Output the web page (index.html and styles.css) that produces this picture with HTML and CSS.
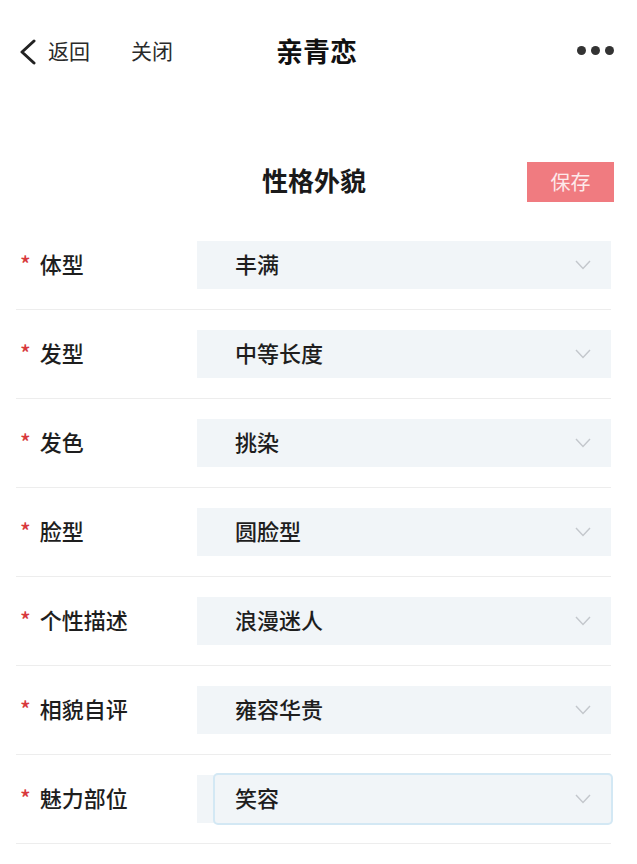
FILE: index.html
```html
<!DOCTYPE html>
<html lang="zh-CN">
<head>
    <meta charset="UTF-8">
    <meta name="viewport" content="width=device-width, initial-scale=1.0">
    <title>亲青恋</title>
    <link rel="stylesheet" href="styles.css">
</head>
<body>
    <!-- 顶部导航 -->
    <div class="nav">
        <div class="nav-left">
            <svg class="back-icon" width="18" height="26" viewBox="0 0 18 26">
                <path d="M15 2 L3 13 L15 24" fill="none" stroke="#222" stroke-width="3" stroke-linecap="round" stroke-linejoin="round"/>
            </svg>
            <span class="nav-link">返回</span>
            <span class="nav-link close">关闭</span>
        </div>
        <div class="nav-title">亲青恋</div>
        <div class="nav-right">
            <span class="dot"></span><span class="dot"></span><span class="dot"></span>
        </div>
    </div>

    <div class="section-head">
        <span></span>
        <h2>性格外貌</h2>
        <button class="save-btn">保存</button>
    </div>

    <div class="form">
        <div class="row">
            <label><i>*</i>体型</label>
            <div class="select"><span>丰满</span><svg class="arrow" width="16" height="10" viewBox="0 0 16 10"><path d="M1 1 L8 8.5 L15 1" fill="none" stroke="#c3c7cc" stroke-width="1.4"/></svg></div>
        </div>
        <div class="row">
            <label><i>*</i>发型</label>
            <div class="select"><span>中等长度</span><svg class="arrow" width="16" height="10" viewBox="0 0 16 10"><path d="M1 1 L8 8.5 L15 1" fill="none" stroke="#c3c7cc" stroke-width="1.4"/></svg></div>
        </div>
        <div class="row">
            <label><i>*</i>发色</label>
            <div class="select"><span>挑染</span><svg class="arrow" width="16" height="10" viewBox="0 0 16 10"><path d="M1 1 L8 8.5 L15 1" fill="none" stroke="#c3c7cc" stroke-width="1.4"/></svg></div>
        </div>
        <div class="row">
            <label><i>*</i>脸型</label>
            <div class="select"><span>圆脸型</span><svg class="arrow" width="16" height="10" viewBox="0 0 16 10"><path d="M1 1 L8 8.5 L15 1" fill="none" stroke="#c3c7cc" stroke-width="1.4"/></svg></div>
        </div>
        <div class="row">
            <label><i>*</i>个性描述</label>
            <div class="select"><span>浪漫迷人</span><svg class="arrow" width="16" height="10" viewBox="0 0 16 10"><path d="M1 1 L8 8.5 L15 1" fill="none" stroke="#c3c7cc" stroke-width="1.4"/></svg></div>
        </div>
        <div class="row">
            <label><i>*</i>相貌自评</label>
            <div class="select"><span>雍容华贵</span><svg class="arrow" width="16" height="10" viewBox="0 0 16 10"><path d="M1 1 L8 8.5 L15 1" fill="none" stroke="#c3c7cc" stroke-width="1.4"/></svg></div>
        </div>
        <div class="row">
            <label><i>*</i>魅力部位</label>
            <div class="select focus-wrap">
                <div class="select focused"><span>笑容</span><svg class="arrow" width="16" height="10" viewBox="0 0 16 10"><path d="M1 1 L8 8.5 L15 1" fill="none" stroke="#c3c7cc" stroke-width="1.4"/></svg></div>
            </div>
        </div>
    </div>
</body>
</html>
```

FILE: styles.css
```css
body {
    margin: 0;
    background: #fff;
    color: #222;
    font-family: "Noto Sans CJK SC", "Noto Sans", sans-serif;
}

/* 导航 */
.nav {
    height: 100px;
    display: grid;
    grid-template-columns: 1fr auto 1fr;
    align-items: center;
    padding: 0 23px 0 19px;
}
.nav-left {
    display: flex;
    align-items: center;
}
.back-icon {
    margin-right: 11px;
    margin-top: 3px;
}
.nav-link {
    font-size: 21px;
    color: #2a2a2a;
}
.nav-link.close {
    margin-left: 41px;
}
.nav-title {
    font-size: 27px;
    font-weight: 700;
    color: #111;
}
.nav-right {
    display: flex;
    justify-content: flex-end;
    gap: 5px;
}
.dot {
    width: 9px;
    height: 9px;
    border-radius: 50%;
    background: #333;
}

/* 标题 + 保存 */
.section-head {
    margin-top: 61px;
    height: 40px;
    display: grid;
    grid-template-columns: 1fr auto 1fr;
    align-items: center;
    padding: 0 23px 0 14px;
}
.section-head h2 {
    margin: 0 0 4px;
    font-size: 26px;
    font-weight: 700;
    color: #1a1a1a;
}
.save-btn {
    justify-self: end;
    width: 87px;
    height: 40px;
    border: none;
    background: #f07b80;
    color: #fde9ea;
    font-family: inherit;
    font-size: 20px;
    padding: 0;
}

/* 表单 */
.form {
    margin: 20px 26px 0 16px;
}
.row {
    display: flex;
    align-items: center;
    padding: 20px 0;
    border-bottom: 1px solid #ededed;
}
.row label {
    width: 181px;
    padding: 0 0 5px 4px;
    box-sizing: border-box;
    font-size: 22px;
    font-weight: 500;
    color: #1e1e1e;
}
.row label i {
    font-style: normal;
    color: #d8393c;
    margin-right: 9px;
}
.select {
    flex: 1;
    height: 48px;
    box-sizing: border-box;
    background: #f1f5f8;
    display: flex;
    align-items: center;
    justify-content: space-between;
    padding: 0 20px 0 38px;
    font-size: 22px;
    font-weight: 500;
    color: #1e1e1e;
}
.select span {
    padding-bottom: 5px;
}
.focus-wrap {
    padding: 0 0 0 18px;
}
.focused {
    padding-left: 20px;
    border-radius: 3px;
    box-shadow: 0 0 0 2px #d3e8f4;
}
```
